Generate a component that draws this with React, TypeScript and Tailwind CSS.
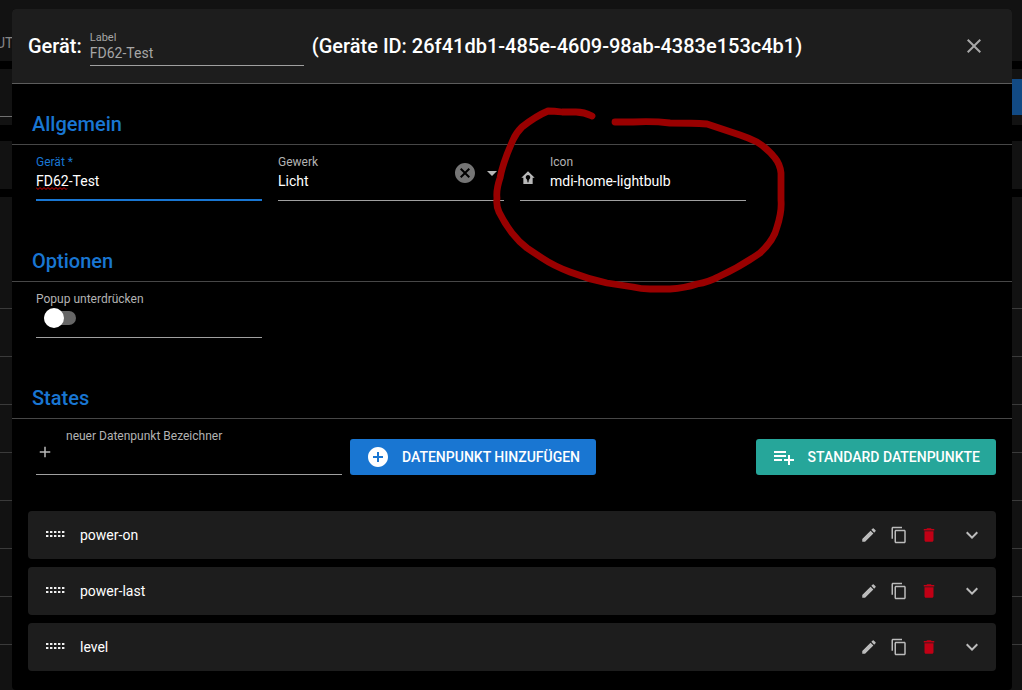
import React, { useState } from 'react';
import {
  MdAdd,
  MdAddCircle,
  MdArrowDropDown,
  MdCancel,
  MdClose,
  MdContentCopy,
  MdDelete,
  MdEdit,
  MdExpandMore,
} from 'react-icons/md';

const STATES = ['power-on', 'power-last', 'level'];

// --- icons ---
const HomeLightbulbIcon = () => (
  <svg viewBox="0 0 24 24" className="size-4 shrink-0 text-[#b8b8b8]" fill="currentColor" aria-hidden="true">
    <path
      fillRule="evenodd"
      d="M12 2 2 11.500h3V21h14v-9.500h3L12 2ZM12 7.500a3.500 3.500 0 0 1 1.600 6.600V16h-3.200v-1.900A3.500 3.500 0 0 1 12 7.500Zm-1.200 9.500h2.400v1.200h-2.400V17Z"
    />
  </svg>
);

const PlaylistPlusIcon = () => (
  <svg viewBox="0 0 24 24" className="size-6 shrink-0" fill="currentColor" aria-hidden="true">
    <path d="M2 16h8v-2H2v2Zm16-2v-4h-2v4h-4v2h4v4h2v-4h4v-2h-4Zm-4-8H2v2h12V6Zm0 4H2v2h12v-2Z" />
  </svg>
);

const DragIcon = () => (
  <svg viewBox="0 0 20 8" className="h-2 w-5 shrink-0" fill="#f0f0f0" aria-hidden="true">
    {[0, 4, 8, 12, 16].map((x) => (
      <React.Fragment key={x}>
        <rect x={x} y="0" width="2.400" height="2" />
        <rect x={x} y="4" width="2.400" height="2" />
      </React.Fragment>
    ))}
  </svg>
);

// --- building blocks ---
const Section: React.FC<{ title: string; children: React.ReactNode }> = ({ title, children }) => (
  <section>
    <h2 className="border-b border-[#474747] px-5 pt-6 pb-1 text-xl leading-8 font-medium text-[#1976d2]">
      {title}
    </h2>
    {children}
  </section>
);

const labelClass = 'block text-xs leading-[18px] text-[#b3b3b3]';
const inputClass = 'block h-5 w-full bg-transparent text-sm leading-5 text-white outline-none';
const fieldClass = 'h-14 border-b border-[#a0a0a0] pt-2';

const StateRow: React.FC<{ name: string }> = ({ name }) => (
  <li className="flex h-12 items-center rounded bg-[#1d1d1d] pr-3 pl-[18px] text-[#bbbbbb]">
    <DragIcon />
    <span className="ml-[14px] flex-1 text-sm text-white">{name}</span>
    <button type="button" aria-label="Bearbeiten" className="flex w-[30px] justify-center">
      <MdEdit size={18} />
    </button>
    <button type="button" aria-label="Kopieren" className="flex w-[30px] justify-center">
      <MdContentCopy size={18} />
    </button>
    <button type="button" aria-label="Löschen" className="flex w-[30px] justify-center text-[#c10015]">
      <MdDelete size={18} />
    </button>
    <button type="button" aria-label="Aufklappen" className="ml-4">
      <MdExpandMore size={24} />
    </button>
  </li>
);

// dimmed page behind the dialog
const Backdrop = () => (
  <div className="flex h-full flex-col bg-black">
    <div className="flex h-[61px] items-center bg-[#121212] pt-6 text-sm text-[#858585]">
      <span className="-ml-1">UT</span>
    </div>
    <div className="mt-2 flex h-14 flex-col justify-between bg-[#121212] pb-2">
      <div className="mt-[10px] ml-auto h-9 w-24 bg-[#124a84]" />
      <div className="w-24 border-b border-[#707070]" />
    </div>
    <div className="mt-4 h-12 bg-[#121212]" />
    <div className="mt-2 flex-1 bg-[#121212] pt-16">
      {Array.from({ length: 8 }).map((_, i) => (
        <div key={i} className="h-12 border-b border-[#3a3a3a]" />
      ))}
    </div>
  </div>
);

// hand drawn circle around the icon field
const Marker = () => (
  <svg
    viewBox="0 0 300 200"
    className="pointer-events-none absolute top-[100px] left-[490px] h-[200px] w-[300px]"
    fill="none"
    stroke="#990000"
    strokeWidth="6.800"
    strokeLinecap="round"
    strokeLinejoin="round"
    aria-hidden="true"
  >
    <path d="M102 16Q94 12 86 12L72 12Q64 11 58 11Q46 16 32 27Q26 33 23 40C17 54 13 62 10 78Q6 90 7 98Q6 106 9 112Q15 124 22 133Q29 142 37 148L52 158Q64 166 80 172Q98 179 117 183L143 187Q151 189 160 189L180 189Q195 188 207 184Q219 182 228 177Q250 167 270 153Q284 140 287 127Q292 112 291 100V73Q290 64 285 58Q278 49 267 42Q259 38 250 35L217 24Q203 23 180 23Q163 21 143 22H125" />
  </svg>
);

const App: React.FC = () => {
  const [device, setDevice] = useState('FD62-Test');
  const [trade, setTrade] = useState('Licht');
  const [icon, setIcon] = useState('mdi-home-lightbulb');
  const [suppress, setSuppress] = useState(false);
  const [newState, setNewState] = useState('');

  return (
    <div className="relative h-screen overflow-hidden bg-black font-['Roboto',sans-serif]">
      <Backdrop />

      <div className="absolute inset-0 flex pt-[9px] pr-[10px] pl-3">
        <main role="dialog" aria-label="Gerät" className="flex-1 overflow-hidden rounded bg-black">
          <header className="flex h-[75px] items-center border-b border-[#5c5c5c] bg-[#1d1d1d] px-4 text-xl font-medium text-white">
            <span>Gerät:</span>
            <div className="mx-2 h-10 w-[214px] border-b border-[#a0a0a0] pt-[5px] font-normal text-[#a6a6a6]">
              <label htmlFor="label" className="block text-[11px] leading-[14px]">
                Label
              </label>
              <input id="label" value={device} disabled className="block h-4 w-full bg-transparent text-sm" />
            </div>
            <span>(Geräte ID: 26f41db1-485e-4609-98ab-4383e153c4b1)</span>
            <button type="button" aria-label="Schließen" className="mr-[10px] ml-auto text-[#a8a8a8]">
              <MdClose size={24} />
            </button>
          </header>

          <Section title="Allgemein">
            <div className="grid grid-cols-4 gap-4 px-6 pb-5">
              <div className="relative h-14 border-b-2 border-[#1976d2] pt-2">
                <label htmlFor="device" className="block text-xs leading-[18px] text-[#1976d2]">
                  Gerät *
                </label>
                <input
                  id="device"
                  value={device}
                  onChange={(e) => setDevice(e.target.value)}
                  className={inputClass}
                />
                {/* spell check squiggle */}
                <svg
                  viewBox="0 0 33 3"
                  className="absolute top-[42px] left-0 h-[3px] w-[33px]"
                  fill="none"
                  stroke="#e00000"
                  aria-hidden="true"
                >
                  <path d="M0 .5l2 2 2-2 2 2 2-2 2 2 2-2 2 2 2-2 2 2 2-2 2 2 2-2 2 2 2-2 2 2 1-1" />
                </svg>
              </div>

              <div className={`flex ${fieldClass}`}>
                <div className="min-w-0 flex-1">
                  <label htmlFor="trade" className={labelClass}>
                    Gewerk
                  </label>
                  <select
                    id="trade"
                    value={trade}
                    onChange={(e) => setTrade(e.target.value)}
                    className={`appearance-none ${inputClass}`}
                  >
                    <option value="Licht">Licht</option>
                    <option value="" />
                  </select>
                </div>
                <div className="flex h-10 items-center gap-[3px]">
                  <button type="button" aria-label="Leeren" onClick={() => setTrade('')} className="text-[#757575]">
                    <MdCancel size={24} />
                  </button>
                  <MdArrowDropDown size={24} className="text-[#b8b8b8]" />
                </div>
              </div>

              <div className={`flex gap-[14px] ${fieldClass}`}>
                <div className="pt-[17px]">
                  <HomeLightbulbIcon />
                </div>
                <div className="min-w-0 flex-1">
                  <label htmlFor="icon" className={labelClass}>
                    Icon
                  </label>
                  <input id="icon" value={icon} onChange={(e) => setIcon(e.target.value)} className={inputClass} />
                </div>
              </div>
            </div>
          </Section>

          <Section title="Optionen">
            <div className="grid grid-cols-4 gap-4 px-6 pb-5">
              <div className={fieldClass}>
                <label htmlFor="suppress" className={labelClass}>
                  Popup unterdrücken
                </label>
                <input
                  id="suppress"
                  type="checkbox"
                  checked={suppress}
                  onChange={(e) => setSuppress(e.target.checked)}
                  className="relative mt-[3px] ml-2 block h-[14px] w-8 appearance-none rounded-full bg-[#666666] before:absolute before:-top-[3px] before:left-0 before:size-5 before:rounded-full before:bg-white checked:bg-[#1976d2] checked:before:left-3"
                />
              </div>
            </div>
          </Section>

          <Section title="States">
            <div className="flex items-end gap-2 pr-4 pl-6">
              <div className={`flex w-[306px] gap-3 ${fieldClass}`}>
                <div className="pt-4 text-[#b8b8b8]">
                  <MdAdd size={18} />
                </div>
                <div className="min-w-0 flex-1">
                  <label htmlFor="new-state" className={labelClass}>
                    neuer Datenpunkt Bezeichner
                  </label>
                  <input
                    id="new-state"
                    value={newState}
                    onChange={(e) => setNewState(e.target.value)}
                    className={inputClass}
                  />
                </div>
              </div>
              <button
                type="button"
                className="flex h-9 items-center gap-3 rounded-[3px] bg-[#1976d2] px-4 text-sm font-medium text-white uppercase"
              >
                <MdAddCircle size={24} />
                Datenpunkt hinzufügen
              </button>
              <button
                type="button"
                className="ml-auto flex h-9 items-center gap-3 rounded-[3px] bg-[#26a69a] px-4 text-sm font-medium text-white uppercase"
              >
                <PlaylistPlusIcon />
                Standard Datenpunkte
              </button>
            </div>

            <ul className="mt-9 flex flex-col gap-2 px-4">
              {STATES.map((name) => (
                <StateRow key={name} name={name} />
              ))}
            </ul>
          </Section>
        </main>
      </div>

      <Marker />
    </div>
  );
};

export default App;
